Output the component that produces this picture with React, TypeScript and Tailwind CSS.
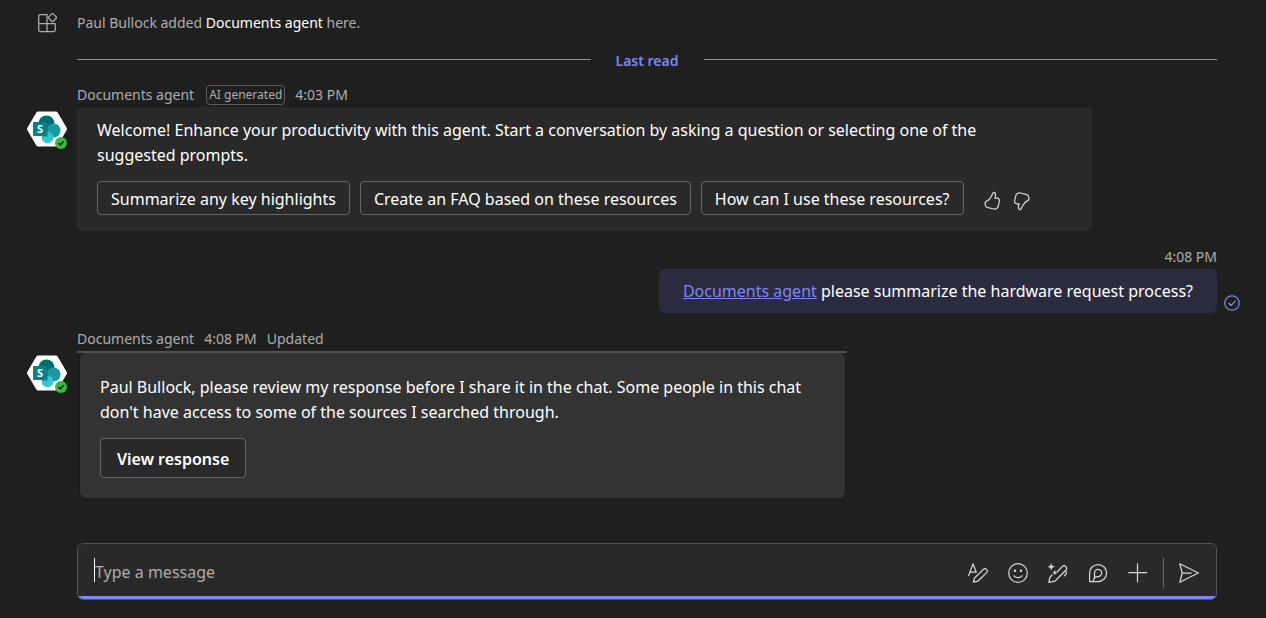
import React from 'react';

type IconProps = { className?: string };

const stroke = {
  fill: 'none',
  stroke: 'currentColor',
  strokeWidth: 1.25,
  strokeLinecap: 'round' as const,
  strokeLinejoin: 'round' as const,
};

const AppsIcon = ({ className }: IconProps) => (
  <svg viewBox="0 0 20 20" className={className} {...stroke}>
    <path d="M9.5 1.5H3.500A1.800 1.800 0 0 0 1.700 3.300v13.400A1.800 1.800 0 0 0 3.500 18.500h13a1.800 1.800 0 0 0 1.800-1.800v-6.200H1.700M10 1.500v17" />
    <path d="M14.800 .9a1 1 0 0 1 1.400 0l3 3a1 1 0 0 1 0 1.400l-3 3a1 1 0 0 1-1.400 0l-3-3a1 1 0 0 1 0-1.400z" />
  </svg>
);

const ThumbIcon = ({ className }: IconProps) => (
  <svg viewBox="0 0 20 20" className={className} {...stroke}>
    <path d="M11.200 1.900c.3-.9 1.800-.6 2.200.6.500 1.500.1 3-.5 4.700h2.300c1.500 0 2.500 1.300 2.200 2.800l-1.100 5c-.5 2.200-2.600 3.500-4.800 3l-6.300-1.600c-.9-.2-1.500-.9-1.700-1.800l-.4-1.900c-.2-1 .3-1.900 1.200-2.300 2.800-1.200 3.900-2.600 5-5.200z" />
  </svg>
);

const FormatIcon = ({ className }: IconProps) => (
  <svg viewBox="0 0 20 20" className={className} {...stroke}>
    <path d="M.7 12.500 5 .9l3.300 8.300M2 9h5.500" />
    <path d="M5.300 19.200 6.600 15 15.400 6.400a2.200 2.200 0 0 1 3.200 3.200L9.800 18.200z" />
  </svg>
);

const EmojiIcon = ({ className }: IconProps) => (
  <svg viewBox="0 0 20 20" className={className} {...stroke}>
    <circle cx="10" cy="10" r="9.300" />
    <path d="M6 12.800c1.900 2.300 6.100 2.300 8 0" />
    <circle cx="7" cy="7.800" r=".6" fill="currentColor" />
    <circle cx="13" cy="7.800" r=".6" fill="currentColor" />
  </svg>
);

const RewriteIcon = ({ className }: IconProps) => (
  <svg viewBox="0 0 20 20" className={className} {...stroke}>
    <path d="M9.200 8.700 14.200 3.600a2.500 2.500 0 0 1 3.600 3.600L6.800 18.200.9 19.300l.9-4.600 2.300-2.700M17.500 7.800c1.100 1.200 1.300 2.400.2 3.700l-1.300 1.300" />
    <path stroke="none" fill="currentColor" d="M3.200 0l1 2.800 2.900 1-2.900 1-1 2.900-1-2.900-2.700-1 2.700-1zM6.900 6.800l.8 2.100 2.100.8-2.100.8-.8 2.100-.8-2.100-2.100-.8 2.100-.8z" />
  </svg>
);

const LoopIcon = ({ className }: IconProps) => (
  <svg viewBox="0 0 20 20" className={className} {...stroke}>
    <path d="M1.600 18.500V10a8.500 8.500 0 1 1 8.500 8.500z" />
    <path d="M6.500 13.500V10a3.600 3.600 0 1 1 3.600 3.600c-2.600 0-4.500 1.400-5 4.900M6.500 10v4.600" />
  </svg>
);

const PlusIcon = ({ className }: IconProps) => (
  <svg viewBox="0 0 20 20" className={className} {...stroke}>
    <path d="M.8 9.500h18M9.500.8v18" />
  </svg>
);

const SendIcon = ({ className }: IconProps) => (
  <svg viewBox="0 0 20 20" className={className} {...stroke}>
    <path d="M.8.800 19.300 10 .8 19.200 3.200 10zM3.200 10h9" />
  </svg>
);

const SeenIcon = ({ className }: IconProps) => (
  <svg viewBox="0 0 16 16" className={className} {...stroke}>
    <circle cx="8" cy="8" r="7.200" />
    <path d="m4.800 8.300 2.200 2.200 4.300-4.400" />
  </svg>
);

const Avatar = () => (
  <svg viewBox="0 0 40 40" className="size-10 shrink-0" role="img" aria-label="Documents agent, available">
    <path
      d="M11.500 2.500h17c1 0 1.800.5 2.300 1.300l8.800 14.900c.5.800.5 1.800 0 2.600l-8.800 15c-.5.800-1.300 1.300-2.300 1.300h-17c-1 0-1.800-.5-2.300-1.300L.4 21.300c-.5-.8-.5-1.800 0-2.600L9.200 3.800c.5-.8 1.300-1.300 2.300-1.300z"
      fill="#fff"
    />
    <circle cx="19.500" cy="14.500" r="8" fill="#036c70" />
    <circle cx="26.500" cy="21.500" r="7" fill="#1a9ba1" />
    <circle cx="20.500" cy="28.500" r="5.800" fill="#37c6d0" />
    <path d="M8 13h13v15H15z" fill="#000" opacity=".2" />
    <rect x="6" y="13" width="14" height="14" rx="1" fill="#038387" />
    <text x="13" y="24" textAnchor="middle" fontSize="11" fontWeight="700" fill="#fff">
      S
    </text>
    <circle cx="34" cy="34" r="6" fill="#3db83d" />
    <path d="m31.500 34 1.800 1.800 3.400-3.600" fill="none" stroke="#1f1f1f" strokeWidth="1.500" />
  </svg>
);

interface MessageProps {
  meta: React.ReactNode;
  children: React.ReactNode;
}

const AgentMessage: React.FC<MessageProps> = ({ meta, children }) => (
  <article className="flex gap-2.5">
    <div className="w-10 shrink-0 pt-6.5">
      <Avatar />
    </div>
    <div className="min-w-0 flex-1">
      <header className="flex h-6 items-center gap-2.5 text-sm text-[#adadad]">{meta}</header>
      {children}
    </div>
  </article>
);

const prompts = [
  'Summarize any key highlights',
  'Create an FAQ based on these resources',
  'How can I use these resources?',
];

const tools = [
  { label: 'Format', Icon: FormatIcon },
  { label: 'Emoji', Icon: EmojiIcon },
  { label: 'Rewrite with Copilot', Icon: RewriteIcon },
  { label: 'Loop components', Icon: LoopIcon },
  { label: 'Actions and apps', Icon: PlusIcon },
];

export default function App() {
  return (
    <main className="flex min-h-screen flex-col bg-[#1f1f1f] pr-[49px] pb-4.5 pl-[27px] pt-[11px] font-['Noto_Sans',sans-serif] text-base leading-[25px] text-white">
      <div className="flex h-6 items-center gap-2.5 text-sm text-[#adadad]">
        <div className="flex w-10 shrink-0 justify-center">
          <AppsIcon className="size-5" />
        </div>
        <p>
          Paul Bullock added <span className="text-white">Documents agent</span> here.
        </p>
      </div>

      <div className="mt-[13px] ml-[50px] flex h-[22px] items-center gap-[25px]">
        <hr className="flex-1 border-[#7f85f5]" />
        <span className="pt-1 text-sm font-semibold text-[#7f85f5]">Last read</span>
        <hr className="flex-1 border-[#7f85f5]" />
      </div>

      <div className="mt-[13px]">
        <AgentMessage
          meta={
            <>
              <span>Documents agent</span>
              <span className="ml-0.5 flex h-5 items-center rounded border border-[#5c5c5c] px-0.5 text-xs">AI generated</span>
              <span>4:03 PM</span>
            </>
          }
        >
          <div className="w-full max-w-[1015px] rounded-md bg-[#292929] px-5 pt-[11px] pb-4">
            <p className="max-w-[910px]">
              Welcome! Enhance your productivity with this agent. Start a conversation by asking a question or selecting one of the suggested prompts.
            </p>
            <div className="mt-[13px] flex flex-wrap items-center gap-2.5">
              {prompts.map(prompt => (
                <button key={prompt} className="h-[34px] rounded border border-[#666] px-[13px] pt-0.5">
                  {prompt}
                </button>
              ))}
              <div className="ml-2 flex gap-2.5 pt-1.5 text-[#d6d6d6]">
                <button aria-label="Like">
                  <ThumbIcon className="size-5" />
                </button>
                <button aria-label="Dislike">
                  <ThumbIcon className="size-5 rotate-180" />
                </button>
              </div>
            </div>
          </div>
        </AgentMessage>
      </div>

      <article className="mt-3.5 flex flex-col items-end">
        <time className="h-6 text-sm leading-6 text-[#adadad]">4:08 PM</time>
        <div className="relative rounded-md bg-[#2b2b40] px-6 pt-2.5 pb-[9px]">
          <a href="#" className="text-[#7f85f5] underline">
            Documents agent
          </a>{' '}
          please summarize the hardware request process?
          <SeenIcon className="absolute -right-[23px] bottom-0.5 size-4 text-[#7f85f5]" />
        </div>
      </article>

      <div className="mt-3.5">
        <AgentMessage
          meta={
            <>
              <span>Documents agent</span>
              <span>4:08 PM</span>
              <span>Updated</span>
            </>
          }
        >
          <div className="max-w-[770px] border-t-2 border-[#525252]">
            <div className="mr-0.5 ml-[3px] rounded-md bg-[#333] px-5 pt-[22px] pb-5 shadow-sm">
              <p>
                Paul Bullock, please review my response before I share it in the chat. Some people in this chat don't have access to some of the sources I searched through.
              </p>
              <button className="mt-[13px] h-10 rounded border border-[#666] bg-[#292929] px-4 pt-0.5 font-semibold">
                View response
              </button>
            </div>
          </div>
        </AgentMessage>
      </div>

      <form className="mt-auto ml-[50px] overflow-hidden rounded-md border border-[#525252] bg-[#292929]">
        <div className="flex h-[52px] items-center pl-4">
          <span className="h-6 w-px bg-white" />
          <input
            type="text"
            aria-label="Type a message"
            placeholder="Type a message"
            className="min-w-0 flex-1 pt-1 outline-none placeholder:text-[#adadad]"
          />
          <div className="flex items-center pt-1.5 text-[#d6d6d6]">
            {tools.map(({ label, Icon }) => (
              <button key={label} type="button" aria-label={label} className="flex w-10 justify-center">
                <Icon className="size-5" />
              </button>
            ))}
            <button
              type="submit"
              aria-label="Send"
              className="ml-[5px] flex h-[30px] w-[53px] items-center border-l border-[#666] pl-[15px]"
            >
              <SendIcon className="size-5" />
            </button>
          </div>
        </div>
        <div className="h-[3px] bg-[#7f85f5]" />
      </form>
    </main>
  );
}
